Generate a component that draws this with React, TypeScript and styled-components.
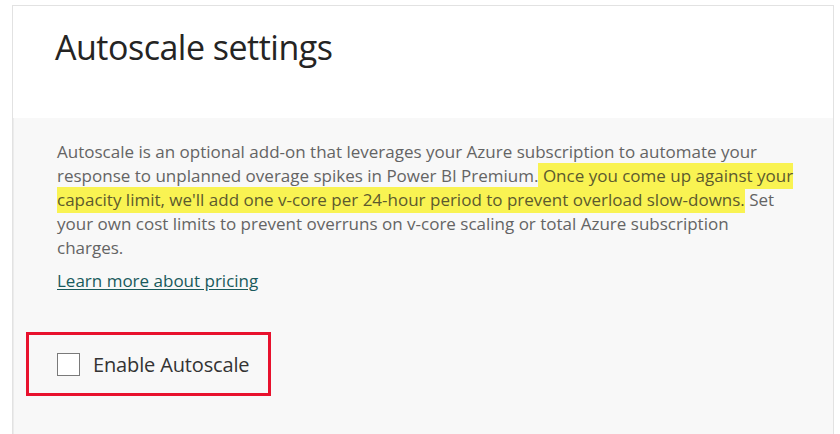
import styled, { createGlobalStyle } from 'styled-components'

const GlobalStyles = createGlobalStyle`
  html, body {
    margin: 0;
    padding: 0;
    background: #ffffff;
  }
  body {
    font-family: "Open Sans", "Noto Sans", sans-serif;
  }
`

const Page = styled.div`
  width: 840px;
  height: 434px;
  padding: 5px 6px 0 12px;
  box-sizing: border-box;
  overflow: hidden;
`

const Panel = styled.div`
  display: flex;
  flex-direction: column;
  height: 100%;
  border: 1px solid #e2e2e2;
  border-bottom: none;
  box-sizing: border-box;
`

const Header = styled.div`
  height: 112px;
  padding: 19px 0 0 42px;
  box-sizing: border-box;
  background: #ffffff;
`

const Title = styled.h1`
  margin: 0;
  font-family: "Open Sans", "Noto Sans", sans-serif;
  font-weight: 400;
  font-size: 34px;
  line-height: 44px;
  color: #252423;
  letter-spacing: -0.5px;
`

const Body = styled.div`
  flex: 1;
  background: #f8f8f8;
  border-left: 1px solid #ececec;
  padding: 22px 0 0 43px;
`

const Text = styled.p`
  margin: 0;
  font-size: 17px;
  line-height: 24px;
  color: #646464;
  white-space: nowrap;
`

const Mark = styled.span`
  background: #f9f352;
  color: #5c5a2e;
  padding: 1px 0 2px;
  box-decoration-break: clone;
  -webkit-box-decoration-break: clone;
`

const Link = styled.a`
  display: inline-block;
  margin-top: 9px;
  font-size: 17px;
  line-height: 24px;
  color: #195a5c;
  text-decoration: underline;
  text-underline-offset: 2px;
  cursor: pointer;
`

const Highlight = styled.div`
  display: flex;
  align-items: center;
  gap: 13px;
  width: 245px;
  height: 64px;
  margin: 39px 0 0 -31px;
  padding-left: 28px;
  border: 3px solid #e8112d;
  box-sizing: border-box;
`

const Box = styled.span`
  width: 23px;
  height: 23px;
  border: 1px solid #7a7a7a;
  background: #ffffff;
  box-sizing: border-box;
`

const Label = styled.span`
  font-size: 20px;
  color: #333333;
  letter-spacing: -0.15px;
`

export default function App() {
  return (
    <Page>
      <GlobalStyles />
      <Panel>
        <Header>
          <Title>Autoscale settings</Title>
        </Header>
        <Body>
          <Text>
            Autoscale is an optional add-on that leverages your Azure subscription to automate your
            <br />
            response to unplanned overage spikes in Power BI Premium.
            <Mark>
              {' '}Once you come up against your
              <br />
              capacity limit, we'll add one v-core per 24-hour period to prevent overload slow-downs.
            </Mark>{' '}
            Set
            <br />
            your own cost limits to prevent overruns on v-core scaling or total Azure subscription
            <br />
            charges.
          </Text>
          <Link>Learn more about pricing</Link>
          <Highlight>
            <Box />
            <Label>Enable Autoscale</Label>
          </Highlight>
        </Body>
      </Panel>
    </Page>
  )
}
